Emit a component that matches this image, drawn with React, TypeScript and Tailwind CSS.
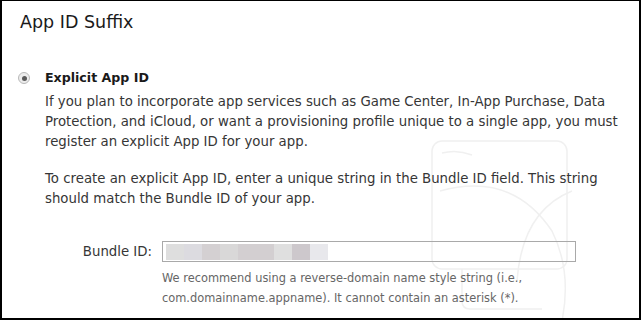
import React from "react";

const blocks = ["#dedede", "#dcdbe0", "#d4d0d2", "#d9d8d8", "#d3cfd1", "#d3cfd1", "#dfdfdf", "#cdc8cc", "#e8e8ec"];

export default function App() {
  return (
    <div className="relative w-[641px] h-[320px] overflow-hidden bg-white border-x-2 border-t border-b-2 border-black font-['DejaVu_Sans',sans-serif]">
      <svg className="absolute left-[420px] top-[130px] pointer-events-none" width="200" height="190" viewBox="0 0 200 190" fill="none" stroke="#f0f0f0" strokeWidth="1.5">
        <rect x="10" y="10" width="135" height="128" rx="10" />
        <path d="M20 22 Q35 18 50 24" />
        <path d="M18 60 Q90 40 130 100 Q150 140 140 190" />
        <path d="M150 60 Q100 80 95 150" />
        <path d="M40 138 L40 170 Q40 178 48 178 L120 178" />
      </svg>
      <div className="relative">
        <h1 className="pl-[18px] pt-[9px] text-[17.5px] leading-[24px] text-[#1a1a1a]">App ID Suffix</h1>
        <div className="mt-[34px] flex items-center h-[20px]">
          <div className="ml-[16px] w-[12px] h-[12px] rounded-full border border-[#b9b9b9] bg-[#ececec] flex items-center justify-center">
            <div className="w-[5px] h-[5px] rounded-full bg-[#5a5a5a]" />
          </div>
          <span className="ml-[15px] font-bold text-[12.6px] text-[#1a1a1a]">Explicit App ID</span>
        </div>
        <div className="pl-[43px] pr-[14px] text-[13.3px] leading-[20px] text-[#363636]">
          <p className="mt-[4px]">
            If you plan to incorporate app services such as Game Center, In-App Purchase, Data Protection, and iCloud, or want a provisioning profile unique to a single app, you must register an explicit App ID for your app.
          </p>
          <p className="mt-[17px]">
            To create an explicit App ID, enter a unique string in the Bundle ID field. This string should match the Bundle ID of your app.
          </p>
        </div>
        <div className="mt-[32px] flex items-center">
          <span className="w-[150px] text-right text-[13.3px] text-[#363636]">Bundle ID:</span>
          <div className="ml-[10px] w-[414px] h-[21px] border border-[#a9a9a9] flex items-center px-[3px]">
            <div className="flex h-[16px]">
              {blocks.map((c, i) => (
                <div key={i} className="w-[18px] h-full" style={{ backgroundColor: c }} />
              ))}
            </div>
          </div>
        </div>
        <div className="pl-[160px] mt-[6px] text-[11.4px] leading-[20px] text-[#666666]">
          <p>We recommend using a reverse-domain name style string (i.e.,</p>
          <p>com.domainname.appname). It cannot contain an asterisk (*).</p>
        </div>
      </div>
    </div>
  );
}
